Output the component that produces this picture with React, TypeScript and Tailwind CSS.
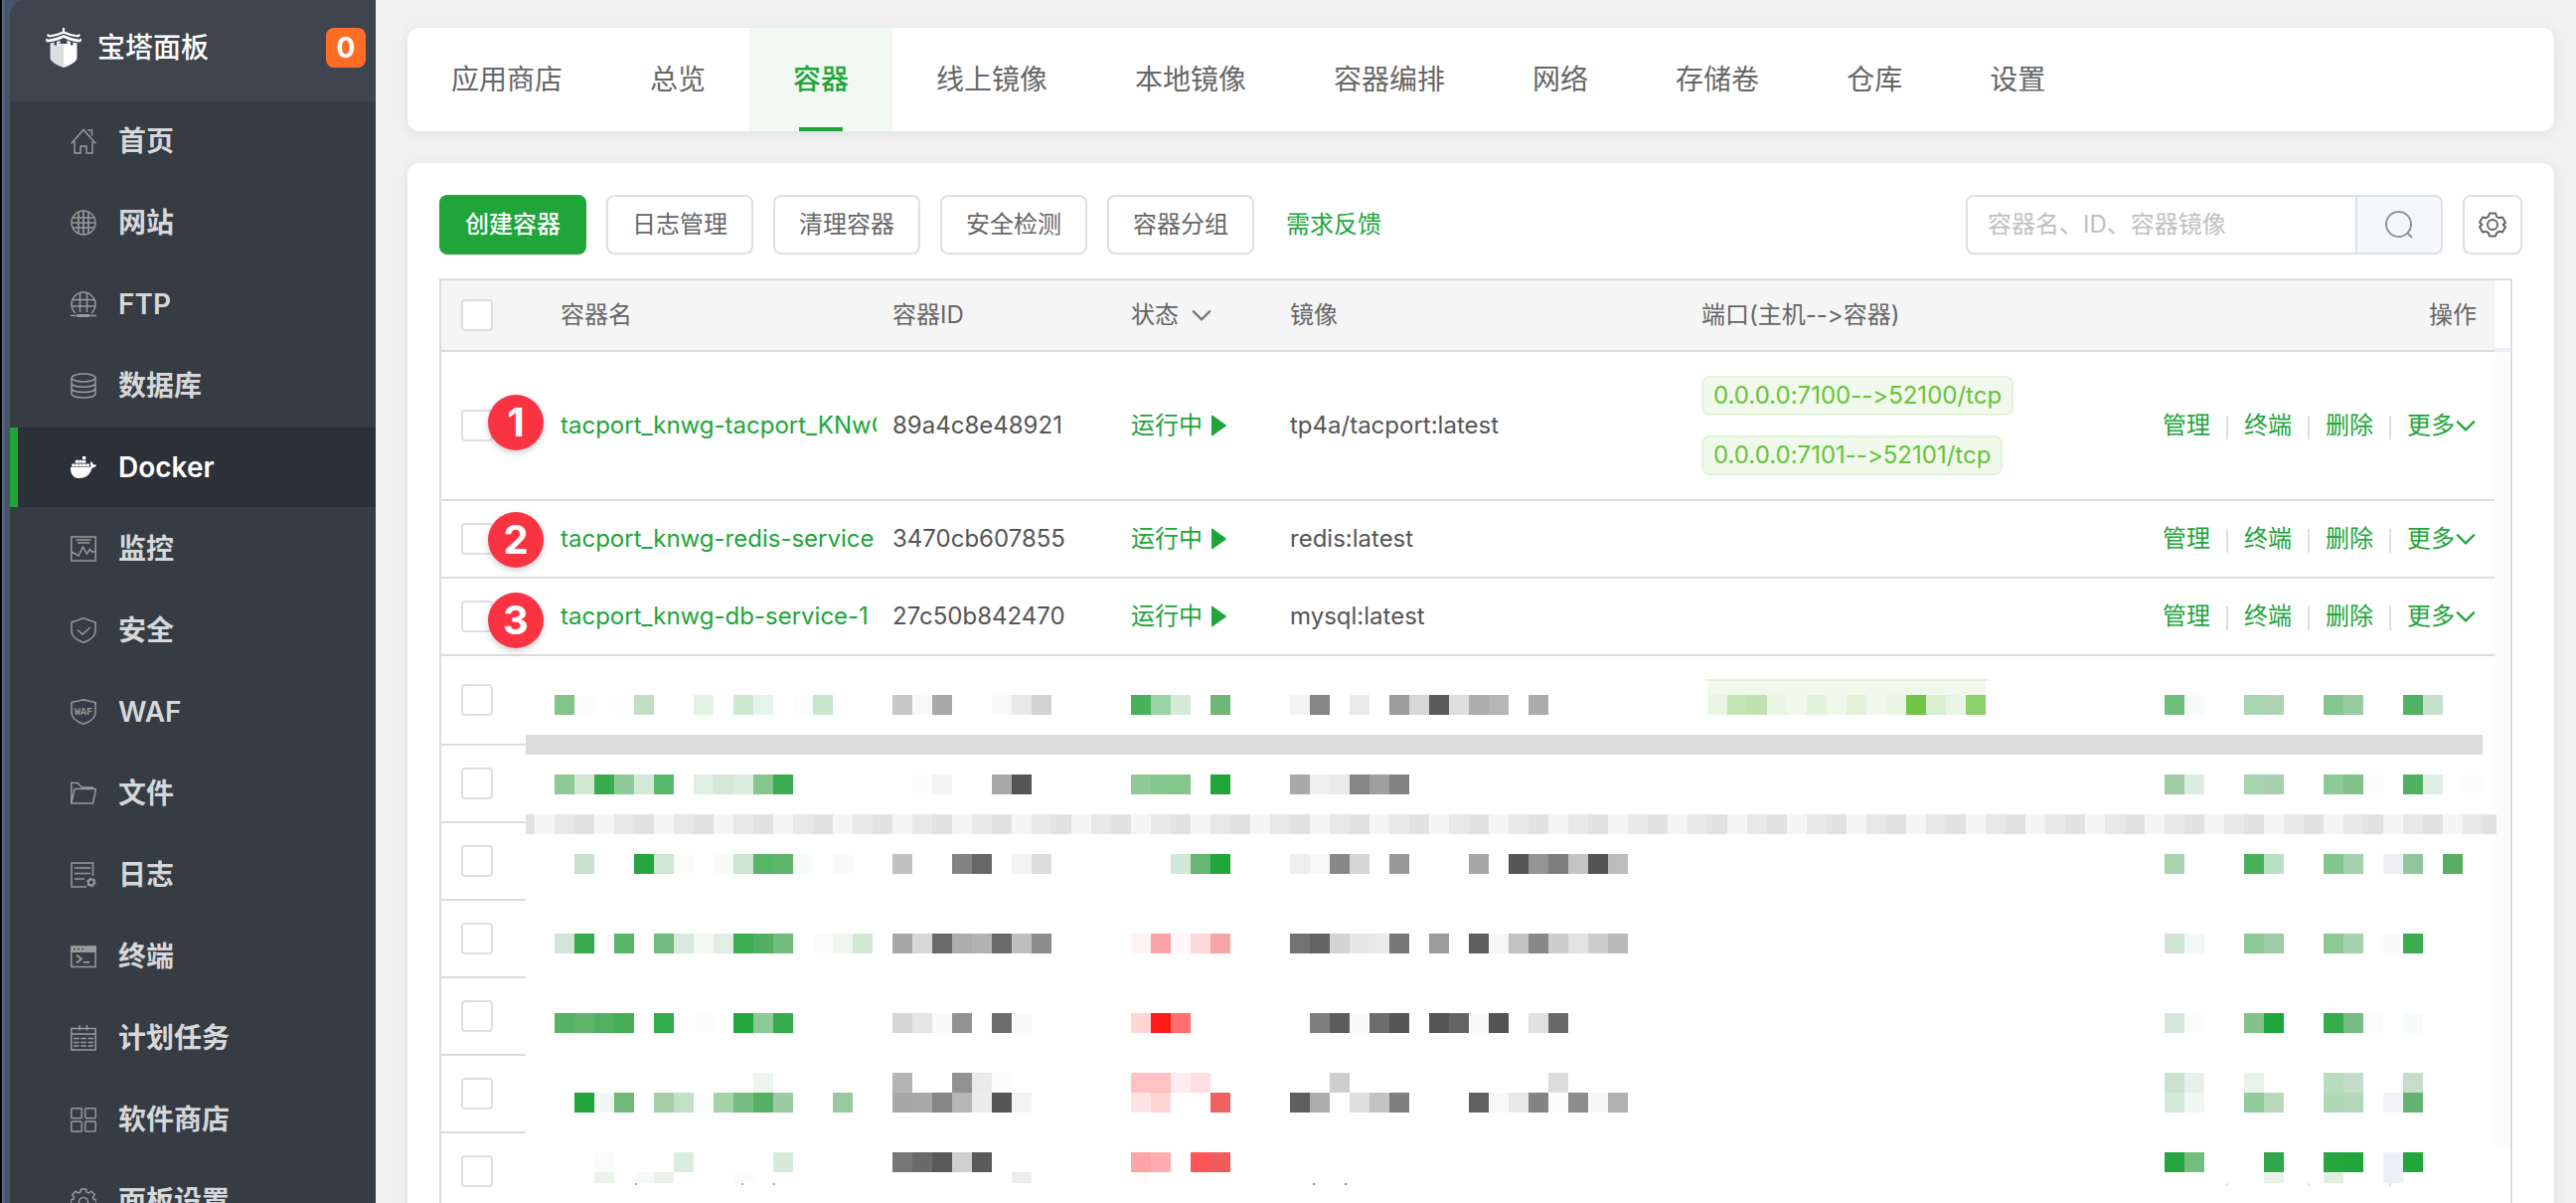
import React from 'react';

const BtLogo = () => (
  <svg viewBox="0 0 36 40" className="w-9 h-10 shrink-0" aria-hidden="true">
    <path d="M18 0v5M3 8.500C9 8 14 6.500 18 4.600c4 1.900 9 3.400 15 3.900M3 8.500L2 6.500M33 8.500l1-2" fill="none" stroke="#fff" strokeWidth="2.200" />
    <path d="M1 13.200c8-.700 13-2.700 17-4.700 4 2 9 4 17 4.700M1 13.200l-1-2M35 13.200l1-2" fill="none" stroke="#fff" strokeWidth="2.600" />
    <path d="M4.500 15.500l4-1v3h2.500v-3.500l3.500-1.500v3.500H18V40C11 37.500 4.500 34 4.500 30z" fill="#dedfe0" />
    <path d="M31.500 15.500l-4-1v3H25v-3.500l-3.500-1.500v3.500H18V40c7-2.500 13.500-6 13.500-10z" fill="#fff" />
  </svg>
);

const DockerIcon = () => (
  <svg viewBox="0 0 26 26" className="w-[26px] h-[26px] shrink-0" fill="currentColor" aria-hidden="true">
    <path d="M12 2h3.300v3H12zM4.800 5.700h3.300v3H4.800zM8.400 5.700h3.300v3H8.400zM12 5.700h3.300v3H12z" />
    <path d="M1.200 9.400h3.300v3H1.200zM4.800 9.400h3.300v3H4.800zM8.400 9.400h3.300v3H8.400zM12 9.400h3.300v3H12zM15.600 9.400h3.300v3h-3.300z" />
    <path d="M0 13h17.800c1.500 0 2.300-.4 2.700-1.300-1-1.600-.8-3.400.2-4.700 1.200.8 1.900 2 2 3.300 1.200-.3 2.400-.1 3.300.5-.6 1.700-2.200 2.700-4.300 2.700C20 20 15.500 24 9 24 3 24-.3 20 0 13z" />
  </svg>
);

interface LineIconProps {
  children: React.ReactNode;
}

const LineIcon: React.FC<LineIconProps> = ({ children }) => (
  <svg
    viewBox="0 0 26 26"
    className="w-[26px] h-[26px] shrink-0 text-[#999]"
    fill="none"
    stroke="currentColor"
    strokeWidth="1.500"
    aria-hidden="true"
  >
    {children}
  </svg>
);

const menu = [
  {
    label: '首页',
    icon: (
      <LineIcon>
        <path d="M.6 15.500L13 1.500l12.400 14M4 13.500V25h6v-7h6v7h6V13.500M17.500 2h4v5.500" />
      </LineIcon>
    ),
  },
  {
    label: '网站',
    icon: (
      <LineIcon>
        <circle cx="13" cy="13" r="12" />
        <path d="M8 2v22M13 1v24M18 2v22M2 8h22M1 13h24M2 18h22" strokeWidth="1.700" />
      </LineIcon>
    ),
  },
  {
    label: 'FTP',
    icon: (
      <LineIcon>
        <path d="M5 22a12 12 0 1 1 16 0M9.500 1.500V21M16.500 1.500V21M2 8.500h22M1 15h24M0 24.500h26" />
        <path d="M7 24.500h12" strokeWidth="3" />
      </LineIcon>
    ),
  },
  {
    label: '数据库',
    icon: (
      <LineIcon>
        <ellipse cx="13" cy="5" rx="12" ry="4" />
        <path d="M1 5v16c0 5.300 24 5.300 24 0V5M1 10.300c0 5.300 24 5.300 24 0M1 15.600c0 5.300 24 5.300 24 0" />
      </LineIcon>
    ),
  },
  { label: 'Docker', icon: <DockerIcon />, active: true },
  {
    label: '监控',
    icon: (
      <LineIcon>
        <path d="M.8 1h24.400v24H.8zM5.500 4h15M7 7h12M1 16l7 4 4.500-9 4 7 3-4.500 2 2.500H25" />
      </LineIcon>
    ),
  },
  {
    label: '安全',
    icon: (
      <LineIcon>
        <path d="M13 .8L25 5v8.500c0 5-5 9.500-12 11.700C6 23 1 18.500 1 13.500V5zM7 12.500l5 4.500 8-7" />
      </LineIcon>
    ),
  },
  {
    label: 'WAF',
    icon: (
      <LineIcon>
        <path d="M13 .8L25 3.500v10c0 5-5 9.500-12 11.700C6 23 1 18.500 1 13.500v-10z" />
        <text x="13" y="16" textAnchor="middle" fontSize="10" fontWeight="700" fill="currentColor" stroke="none" fontFamily="Liberation Mono, monospace">
          WAF
        </text>
      </LineIcon>
    ),
  },
  {
    label: '文件',
    icon: (
      <LineIcon>
        <path d="M23 7H11.500L7 2.500H.8V23h21.700l3-14.500H4L1 22.500" />
      </LineIcon>
    ),
  },
  {
    label: '日志',
    icon: (
      <LineIcon>
        <path d="M22.500 14V1H1v24h15M4 6h16M4 11.500h16M4 17h10" />
        <circle cx="20.800" cy="20.500" r="3" strokeWidth="2" />
        <circle cx="20.800" cy="20.500" r="4.200" strokeWidth="1.200" strokeDasharray="2 2.400" />
      </LineIcon>
    ),
  },
  {
    label: '终端',
    icon: (
      <LineIcon>
        <path d="M.8 3h24.400v20.500H.8z" />
        <path d="M0 2.500h26V9H0z" fill="currentColor" stroke="none" />
        <path d="M3 5.500h2M7 5.500h2M11 5.500h2" stroke="#353c44" strokeWidth="1.200" />
        <path d="M6 11.500l5 4-5 4M13 18.800h6" strokeWidth="1.800" />
      </LineIcon>
    ),
  },
  {
    label: '计划任务',
    icon: (
      <LineIcon>
        <path d="M.8 3.500h24.400V25H.8zM1 9h24M9 0v5.500M16.500 0v5.500" />
        <path d="M3 13.500h20M3 17.500h20M3 21h20" strokeDasharray="5.500 1.800" />
      </LineIcon>
    ),
  },
  {
    label: '软件商店',
    icon: (
      <LineIcon>
        <rect x=".8" y="1.800" width="10.500" height="10" rx="1" />
        <rect x="14.700" y="1.800" width="10.500" height="10" rx="1" />
        <rect x=".8" y="15" width="10.500" height="10" rx="1" />
        <rect x="14.700" y="15" width="10.500" height="10" rx="1" />
      </LineIcon>
    ),
  },
  {
    label: '面板设置',
    icon: (
      <LineIcon>
        <path d="M10.600 1h4.800l.7 3 2.200.9 2.600-1.700 3.300 3.400-1.700 2.500.9 2.200 2.600.7v4.800l-2.600.7-.9 2.200 1.700 2.600-3.300 3.300-2.600-1.700-2.200.9-.7 2.700h-4.800l-.7-2.700-2.200-.9-2.600 1.700-3.300-3.300 1.700-2.600-.9-2.200-2.300-.7v-4.800l2.300-.7.9-2.200-1.700-2.500 3.300-3.400 2.600 1.700 2.200-.9z" />
        <circle cx="13" cy="14" r="4.500" />
      </LineIcon>
    ),
  },
];

const tabs = ['应用商店', '总览', '容器', '线上镜像', '本地镜像', '容器编排', '网络', '存储卷', '仓库', '设置'];

const toolbar = ['日志管理', '清理容器', '安全检测', '容器分组'];

const containers = [
  {
    name: 'tacport_knwg-tacport_KNwG',
    id: '89a4c8e48921',
    image: 'tp4a/tacport:latest',
    ports: ['0.0.0.0:7100-->52100/tcp', '0.0.0.0:7101-->52101/tcp'],
  },
  { name: 'tacport_knwg-redis-service', id: '3470cb607855', image: 'redis:latest', ports: [] },
  { name: 'tacport_knwg-db-service-1', id: '27c50b842470', image: 'mysql:latest', ports: [] },
];

// Heights of the rows whose content is pixelated
const hiddenRows = ['h-[90px]', 'h-[78px]', 'h-[78px]', 'h-[78px]', 'h-[78px]', 'h-[78px]', 'h-[78px]'];

// One entry per run of 20px cells: [top, first column, colours]; '-' leaves a cell empty
type Run = [number, number, string];

const leftRuns: Run[] = [
  [39, 0, '84c58b fafdfa - fdfdfd c2dfc6 - - e4f3e5 - cde7d0 e4f4e9 - fafdfc c8e6cd'],
  [39, 17, 'c8c8c8 f8f8f8 a9a9a9 - - f8f8f8 e8e8e8 d3d3d3'],
  [39, 29, '48b15a 9dd2a6 d3ebd7 - 70b678'],
  [39, 37, 'f4f4f4 868686 - e9e9e9 - 9d9d9d d7d7d7 5b5b5b dedede adadad b5b5b5 - ababab'],
  [39, 58, 'e9f5e4 c3e5b6 c0e2b3 eaf6e5 f0f8ec e2f3d9 f0f8ec e2f2d9 f0f8ec eaf6e5 70c544 d9eed0 e9f5e4 8cd06c'],
  [119, 0, '8fc897 d0e8d2 37ad4d 8fcb99 d3e9d8 59b96a - dfefe3 d4e9d5 dceee0 85c68f 3bac4f'],
  [119, 18, 'fcfcfc f3f3f3 - - a8a8a8 555555'],
  [119, 29, '91ca99 84c890 84c68c - 21a63a'],
  [119, 37, 'a9a9a9 eeeeee eaeaea 868686 9f9f9f 828282'],
  [199, 1, 'c9e1cd - - 24a73e cfe8d3 fafcf9 - f9fbf9 cfe6d3 56b566 5eb46b f7fcf9 - f9fbf9'],
  [199, 17, 'c1c1c1 - - 838383 686868 - f3f3f3 dddddd'],
  [199, 31, 'd0e8d5 66b773 21a63a'],
  [199, 37, 'eeeeee f8f8f8 888888 d5d5d5 - 989898 - - - a7a7a7 - 565656 959595 7d7d7d c4c4c4 535353 bdbdbd'],
  [279, 0, 'd3e5d6 36aa4b fcfefb 59b568 - 71bd7e d7eadd f2f8f3 e1efe2 3cae52 51af61 73bb7f - fafcfa eff5ef d2e7d4'],
  [279, 17, 'a7a7a7 d7d7d7 6b6b6b acacac b2b2b2 6b6b6b bebebe 8c8c8c'],
  [279, 29, 'fff3f2 ffa3a5 fff8f9 ffd8d9 f5a5a6'],
  [279, 37, '737373 636363 d3d3d3 e7e7e7 e9e9e9 777777 - 9b9b9b - 5e5e5e f7f7f7 c2c2c2 888888 cdcdcd e3e3e3 cdcdcd b9b9b9'],
  [359, 0, '56b364 5fb56d 54af62 46ae59 - 35ac4a - fafdfa - 24a63d 8cca96 36ab4c'],
  [359, 17, 'd6d6d6 e5e5e5 f9f9f9 929292 - 6d6d6d fafafa'],
  [359, 29, 'ffd6d6 ff1a1a ff6f70'],
  [359, 38, '7f7f7f 5d5d5d fafafa 6d6d6d 565656 - 555555 646464 f8f8f8 545454 - e1e1e1 696969'],
  [419, 10, 'eef5ef'],
  [419, 17, 'b4b4b4 - - 929292 eaeaea fbfbfb'],
  [419, 29, 'ffc1c2 ffc3c3 ffecec ffdfe1'],
  [419, 39, 'cecece'],
  [419, 50, 'dcdcdc'],
  [439, 1, '23a53d f0f6f1 6fb87a - a2cea8 c1e0c6 f9fdfa a4d2ab 75bd82 56b064 9ccaa2 - - 99ca9f'],
  [439, 17, 'a7a7a7 a9a9a9 868686 b6b6b6 ececec 555555 f3f3f3'],
  [439, 29, 'ffe4e6 ffd4d5 - - f16162'],
  [439, 37, '5f5f5f adadad - dfdfdf c2c2c2 7f7f7f - - - 616161 f8f8f8 e8e8e8 848484 fcfcfc 8c8c8c f7f7f7 b1b1b1'],
  [499, 2, 'fafcfa - - - d9eedf - - - - d5ebd9'],
  [499, 17, '777777 6a6a6a 595959 cfcfcf 5a5a5a'],
  [499, 29, 'ffa5a6 ffadae - ff5556 f15b5c'],
  [519, 2, 'ebf3eb - f5fbf7 ebf2eb - - - fafcf9'],
  [519, 23, 'ececec - - - - - fffafa'],
];

const rightRuns: Run[] = [
  [39, 0, '6fbe7b f6fbf8 - - a9d5b1 afd3b3 - - 85c790 9acca2 - - 50b262 c5e1c9'],
  [119, 0, '9fcba5 daecde - - a6d4af a9d0ae - - 8ecb98 80c28a fcfcfd - 50b05f deefe2 - fafdfc'],
  [199, 0, 'aad3b0 - - - 48b05b bbdfc3 - - 83c68d a5d1ad - edeef3 8fc79b - 58b062'],
  [279, 0, 'cde5d2 f1faf4 - - 8bc996 a1cba6 - - 8bc896 a6d3ae - fbfafb 3cac50'],
  [359, 0, 'd4e8d9 fbfdfb - - 83c28b 20a53b - - 36ab4b 76bd81 fafcfc - f6fbf8'],
  [419, 0, 'cce2cf e7f1e9 - - eaf3eb - - - b9dcbf c5ddc8 - - c5ddc9'],
  [439, 0, 'd4e9d8 f0f8f2 - - 91cb9c b9d9bd - - b0d8b7 b4d7ba - f2f3f6 65b370'],
  [499, 0, '27a53f 73be7f - - - 30a748 - - 27a741 21a53b - eeeff4 22a63b'],
  [519, 0, '- - - - - eaf2ea - - e0efe2 - - eff0f5'],
];

const Cells: React.FC<{ runs: Run[] }> = ({ runs }) => (
  <>
    {runs.map(([top, start, colors]) =>
      colors.split(' ').map((color, i) =>
        color === '-' ? null : (
          <rect
            key={`${top}-${start + i}`}
            x={(start + i) * 20}
            y={top}
            width="20"
            height={top === 519 ? 11 : 20}
            fill={`#${color}`}
          />
        ),
      ),
    )}
  </>
);

// Mosaic that covers the names, ids and images of the remaining rows
const Mosaic = () => (
  <svg className="absolute left-[85px] top-[378px] w-[calc(100%-99px)] h-[540px] pointer-events-none" shapeRendering="crispEdges" aria-hidden="true">
    <defs>
      <pattern id="stripe" x="9" width="60" height="20" patternUnits="userSpaceOnUse">
        <rect width="20" height="20" fill="#f5f5f5" />
        <rect x="20" width="20" height="20" fill="#e8e8e8" />
        <rect x="40" width="20" height="20" fill="#e2e2e2" />
      </pattern>
    </defs>
    <svg x="-14" width="100%" height="540">
      <rect x="14" y="79" width="100%" height="20" fill="#dcdcdc" />
    </svg>
    <rect y="159" width="100%" height="20" fill="url(#stripe)" />
    <rect x="1187" y="23" width="285" height="2" fill="#e1f3d8" />
    <rect x="1189" y="25" width="280" height="14" fill="#f0f8ec" />
    <svg x="29" overflow="visible">
      <Cells runs={leftRuns} />
      <path d="M81 530h2v2h-2zM188 530h2v2h-2zM220 530h2v2h-2z" fill="#7fc78a" />
      <path d="M763 530h2v2h-2zM795 530h2v2h-2z" fill="#8a8a8a" />
    </svg>
    <svg x="100%" overflow="visible">
      <g transform="translate(-334 0)">
        <Cells runs={rightRuns} />
        <path d="M62 530h2v3h-2zM144 530h2v3h-2zM226 530h2v3h-2z" fill="#dcdfe6" />
      </g>
    </svg>
  </svg>
);

const Checkbox: React.FC<{ label: string }> = ({ label }) => (
  <input
    type="checkbox"
    aria-label={label}
    className="block appearance-none w-8 h-8 ml-5 rounded border-2 border-[#dcdfe6] bg-white checked:bg-[#20a53a]"
  />
);

const Chevron: React.FC<{ className: string }> = ({ className }) => (
  <svg viewBox="0 0 20 20" className={className} fill="none" stroke="currentColor" strokeWidth="2" aria-hidden="true">
    <path d="M2 6l8 8 8-8" />
  </svg>
);

const Sidebar = () => (
  <aside className="flex shrink-0 w-[378px] bg-[#47566d] border-l-2 border-black">
    <div className="w-2 shrink-0 border-l-2 border-[#5c6b82]" />
    <div className="flex-1 min-w-0 bg-[#353c44] rounded-tl-2xl overflow-hidden">
      <div className="flex items-start h-[102px] pt-7 pl-9 pr-[10px] bg-[#3e454e]">
        <BtLogo />
        <span className="ml-4 flex-1 text-[28px] leading-10 font-medium text-white">宝塔面板</span>
        <span className="w-10 h-10 rounded-lg bg-[#ff6d26] text-center text-[28px] leading-10 font-bold text-white">0</span>
      </div>
      <nav className="flex flex-col gap-[2px]">
        {menu.map((item) => (
          <a
            key={item.label}
            href="#"
            className={
              item.active
                ? 'flex items-center h-20 pl-[53px] gap-[22px] border-l-8 border-[#20a53a] bg-[#2c3038] text-[28px] font-semibold text-white'
                : 'flex items-center h-20 pl-[61px] gap-[22px] text-[28px] font-semibold text-[#d6d7d9]'
            }
          >
            {item.icon}
            {item.label}
          </a>
        ))}
      </nav>
    </div>
  </aside>
);

// Numbered markers pinned over the table
const markers = [
  { value: 1, top: 'top-[115px]' },
  { value: 2, top: 'top-[233px]' },
  { value: 3, top: 'top-[314px]' },
];

const Marker: React.FC<{ value: number; top: string }> = ({ value, top }) => (
  <span
    className={`absolute left-[47px] ${top} w-14 h-14 rounded-full bg-[#fa3343] shadow-[0_3px_6px_rgba(0,0,0,0.18)] text-center text-[40px] leading-[56px] font-bold text-white`}
  >
    {value}
  </span>
);

const ContainerTable = () => (
  <div className="relative mt-6 mr-[10px] flex border-2 border-[#dcdcdc] min-h-[960px]">
    <table className="flex-1 w-full table-fixed border-separate border-spacing-0 self-start text-2xl text-[#555]">
      <colgroup>
        <col className="w-[120px]" />
        <col className="w-[334px]" />
        <col className="w-[240px]" />
        <col className="w-[160px]" />
        <col className="w-[414px]" />
        <col />
        <col className="w-[356px]" />
      </colgroup>
      <thead>
        <tr className="h-[72px] bg-[#f5f5f5] text-left text-[#666] [&>th]:p-0 [&>th]:border-b-2 [&>th]:border-[#dcdcdc] [&>th]:font-normal">
          <th>
            <Checkbox label="全选" />
          </th>
          <th>容器名</th>
          <th>容器ID</th>
          <th>
            <span className="flex items-center gap-3">
              状态
              <Chevron className="w-[22px] h-[22px] text-[#777]" />
            </span>
          </th>
          <th>镜像</th>
          <th>端口(主机--&gt;容器)</th>
          <th>
            <span className="block pr-[18px] text-right">操作</span>
          </th>
        </tr>
      </thead>
      <tbody>
        {containers.map((item) => (
          <tr
            key={item.id}
            className={
              item.ports.length > 0
                ? 'h-[150px] [&>td]:p-0 [&>td]:border-b-2 [&>td]:border-[#dcdcdc]'
                : 'h-[78px] [&>td]:p-0 [&>td]:border-b-2 [&>td]:border-[#dcdcdc]'
            }
          >
            <td>
              <Checkbox label={item.name} />
            </td>
            <td>
              <a href="#" className="block w-[318px] overflow-hidden whitespace-nowrap text-[#20a53a]">
                {item.name}
              </a>
            </td>
            <td>{item.id}</td>
            <td>
              <span className="flex items-center gap-2 text-[#20a53a]">
                运行中
                <svg viewBox="0 0 16 22" className="w-4 h-[22px]" fill="currentColor" aria-hidden="true">
                  <path d="M1 1.500Q1 0 2.400 1l13 9.200q1 .8 0 1.600l-13 9.200Q1 22 1 20.500z" />
                </svg>
              </span>
            </td>
            <td>{item.image}</td>
            <td>
              <div className="flex flex-col items-start gap-5">
                {item.ports.map((port) => (
                  <span key={port} className="h-10 px-[10px] rounded-lg border-2 border-[#e1f3d8] bg-[#f0f9eb] leading-9 text-[#67c23a]">
                    {port}
                  </span>
                ))}
              </div>
            </td>
            <td>
              <div className="flex items-center justify-end gap-4 pr-[18px] text-[#20a53a]">
                <button>管理</button>
                <span className="w-[2px] h-6 mt-1 bg-[#dcdfe6]" />
                <button>终端</button>
                <span className="w-[2px] h-6 mt-1 bg-[#dcdfe6]" />
                <button>删除</button>
                <span className="w-[2px] h-6 mt-1 bg-[#dcdfe6]" />
                <button className="flex items-center">
                  更多
                  <Chevron className="w-[22px] h-[22px]" />
                </button>
              </div>
            </td>
          </tr>
        ))}
        {hiddenRows.map((height, index) => (
          <tr key={index} className={height}>
            <td className="p-0">
              <div className={`${height} w-[85px] flex items-center border-b-2 border-[#dcdcdc]`}>
                <Checkbox label={`容器 ${index + 4}`} />
              </div>
            </td>
            <td colSpan={6} className="p-0" />
          </tr>
        ))}
      </tbody>
    </table>
    <div className="w-4 shrink-0 flex flex-col">
      <div className="h-[72px] border-b-4 border-[#ebeef5]" />
      <div className="h-[802px] rounded-lg bg-[#fcfcfc]" />
    </div>
    <Mosaic />
    {markers.map((marker) => (
      <Marker key={marker.value} {...marker} />
    ))}
  </div>
);

export default function App() {
  return (
    <div className="flex h-screen overflow-hidden bg-[#f1f1f1] [font-family:Inter,'Noto_Sans_CJK_SC',sans-serif] [font-variant-ligatures:none]">
      <Sidebar />
      <main className="flex-1 min-w-0 pl-8 pr-[22px] pt-7">
        <nav className="flex h-26 overflow-hidden rounded-xl bg-white shadow-[0_2px_12px_rgba(0,0,0,0.08)]">
          {tabs.map((tab) => (
            <a
              key={tab}
              href="#"
              className={
                tab === '容器'
                  ? 'relative flex items-center px-11 bg-[#f0f9f2] text-[28px] text-[#20a53a] font-medium'
                  : 'flex items-center px-11 text-[28px] text-[#666]'
              }
            >
              {tab}
              {tab === '容器' && <span className="absolute left-1/2 bottom-0 -translate-x-1/2 w-11 h-1 bg-[#20a53a]" />}
            </a>
          ))}
        </nav>

        <section className="mt-8 p-8 rounded-xl bg-white shadow-[0_2px_12px_rgba(0,0,0,0.08)]">
          <div className="flex items-center justify-between">
            <div className="flex items-center gap-5 text-2xl">
              <button className="h-[60px] px-[26px] rounded-lg bg-[#20a53a] font-medium text-white">创建容器</button>
              {toolbar.map((label) => (
                <button key={label} className="h-[60px] px-6 rounded-lg border-2 border-[#dcdfe6] text-[#666]">
                  {label}
                </button>
              ))}
              <a href="#" className="ml-3 text-[#20a53a]">
                需求反馈
              </a>
            </div>
            <div className="flex gap-5">
              <div className="flex w-[480px] h-[60px] overflow-hidden rounded-lg border-2 border-[#dcdfe6]">
                <input
                  type="text"
                  aria-label="搜索容器"
                  placeholder="容器名、ID、容器镜像"
                  className="flex-1 min-w-0 px-5 text-2xl text-[#666] placeholder:text-[#c0c0c0] outline-none"
                />
                <button aria-label="搜索" className="flex items-center justify-center w-[86px] border-l-2 border-[#dcdfe6] bg-[#f5f7fa] text-[#909399]">
                  <svg viewBox="0 0 28 28" className="w-7 h-7" fill="none" stroke="currentColor" strokeWidth="2" aria-hidden="true">
                    <circle cx="13.500" cy="13.500" r="12.500" />
                    <path d="M22.500 22.500l4.500 4.500" />
                  </svg>
                </button>
              </div>
              <button aria-label="表格设置" className="flex items-center justify-center w-[60px] h-[60px] rounded-lg border-2 border-[#dcdfe6] text-[#606266]">
                <svg viewBox="0 0 28 28" className="w-7 h-7" fill="none" stroke="currentColor" strokeWidth="1.900" strokeLinejoin="round" aria-hidden="true">
                  <path d="M11 2.500h6l1.200 3.400 2.300 1.300 3.500-.7 3 5.200-2.400 2.300 2.400 2.300-3 5.200-3.500-.7-2.300 1.300L17 25.500h-6l-1.200-3.400-2.300-1.300-3.500.7-3-5.200L3.400 14 1 11.700l3-5.200 3.500.7 2.300-1.300z" />
                  <circle cx="14" cy="14" r="5" />
                </svg>
              </button>
            </div>
          </div>
          <ContainerTable />
        </section>
      </main>
    </div>
  );
}
